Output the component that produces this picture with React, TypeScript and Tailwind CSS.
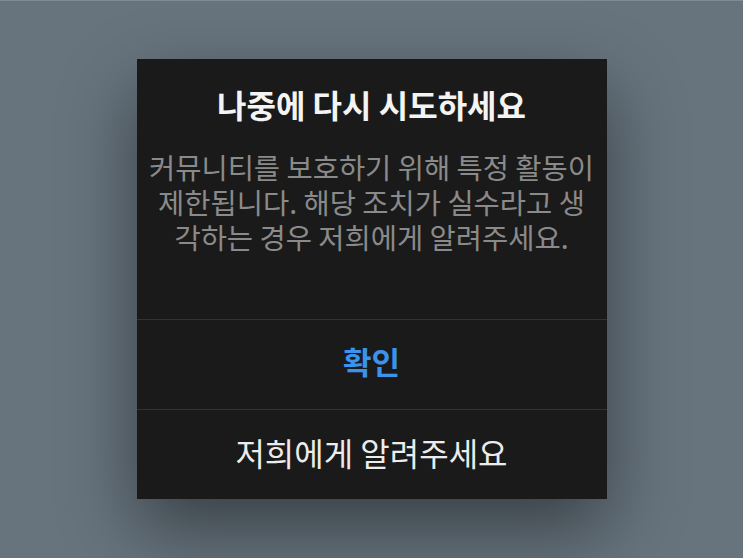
import React from "react";

const App = () => {
  return (
    <div
      className="w-[743px] h-[558px] overflow-hidden bg-[#67747e] border-t border-[#7e8b94] flex justify-center pt-[58px]"
      style={{ fontFamily: '"Noto Sans CJK KR", "Noto Sans", sans-serif' }}
    >
      <div className="w-[470px] h-[440px] bg-[#1a1a1a] flex flex-col overflow-hidden shadow-[0_30px_70px_rgba(0,0,0,0.45)]">
        {/* message */}
        <div className="h-[260px] flex flex-col items-center pt-[26px]">
          <h2 className="text-[32px] leading-[38px] font-bold text-[#f4f4f4] whitespace-nowrap">
            나중에 다시 시도하세요
          </h2>
          <div className="mt-[26px] flex flex-col items-center text-[28.5px] leading-[35px] text-[#8a8a8a] whitespace-nowrap">
            <span className="h-[35px]">커뮤니티를 보호하기 위해 특정 활동이</span>
            <span className="h-[35px]">제한됩니다. 해당 조치가 실수라고 생</span>
            <span className="h-[35px]">각하는 경우 저희에게 알려주세요.</span>
          </div>
        </div>

        {/* actions */}
        <div className="border-t border-[#333333]">
          <button className="w-full h-[89px] flex items-center justify-center pb-[6px] text-[31px] font-bold text-[#3a93ec]">
            확인
          </button>
        </div>
        <div className="border-t border-[#333333]">
          <button className="w-full h-[89px] flex items-center justify-center pb-[6px] text-[32px] text-[#ececec]">
            저희에게 알려주세요
          </button>
        </div>
      </div>
    </div>
  );
};

export default App;
